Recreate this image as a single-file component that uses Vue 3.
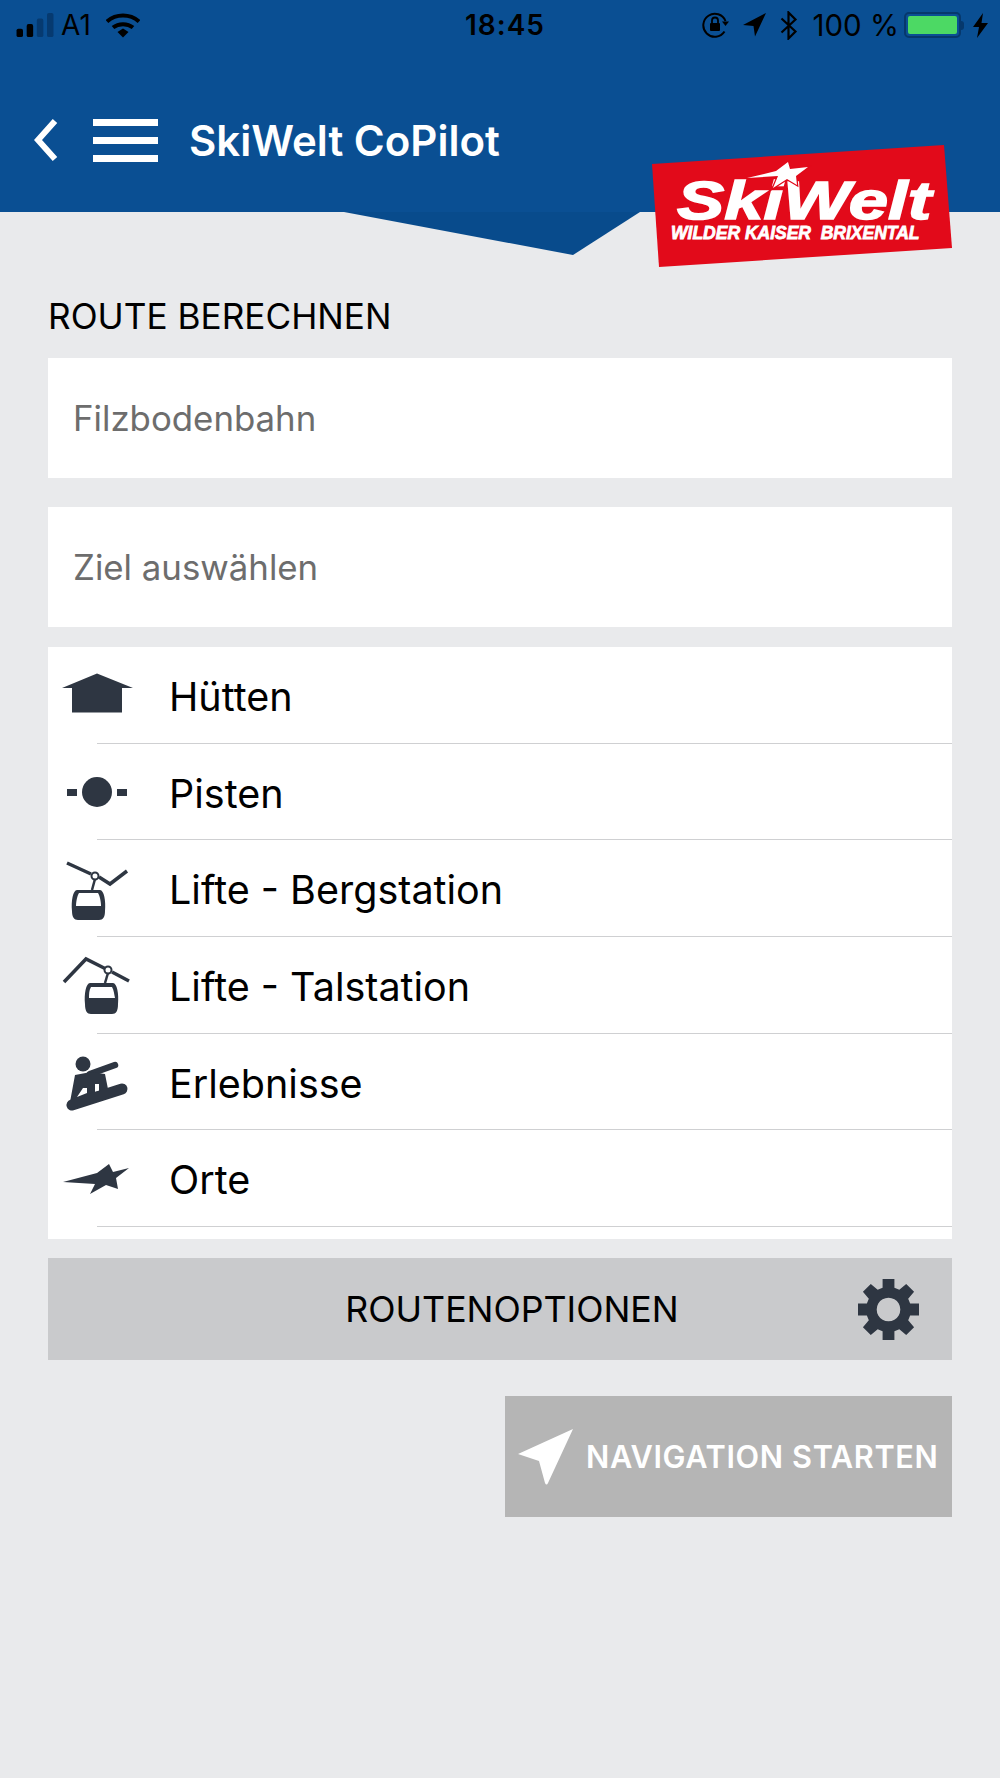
<script setup>
const rows = [
  { label: 'Hütten', icon: 'hut' },
  { label: 'Pisten', icon: 'piste' },
  { label: 'Lifte - Bergstation', icon: 'berg' },
  { label: 'Lifte - Talstation', icon: 'tal' },
  { label: 'Erlebnisse', icon: 'snow' },
  { label: 'Orte', icon: 'star' }
]
</script>

<template>
  <div class="page">
    <header class="head">
      <div class="status">
        <div class="status-left">
          <svg class="signal" width="40" height="24" viewBox="0 0 40 26">
            <rect x="0" y="17" width="7" height="9" rx="2" fill="#000" />
            <rect x="11" y="12" width="7" height="14" rx="2" fill="#000" />
            <rect x="22" y="6" width="7" height="20" rx="2" fill="#063a70" />
            <rect x="33" y="0" width="7" height="26" rx="2" fill="#063a70" />
          </svg>
          <span class="carrier">A1</span>
          <svg class="wifi" width="34" height="25" viewBox="0 0 34 25">
            <path d="M1 8.500C10 0.500 24 0.500 33 8.500" fill="none" stroke="#000" stroke-width="4" />
            <path d="M7 14.500C12.500 10 21.500 10 27 14.500" fill="none" stroke="#000" stroke-width="4" />
            <path d="M11.500 19L17 15.500L22.500 19L17 24.500Z" fill="#000" />
          </svg>
        </div>
        <span class="clock">18:45</span>
        <div class="status-right">
          <svg width="28" height="26" viewBox="0 0 28 26">
            <path d="M22.500 19.500A11.500 11.500 0 1 1 23.500 9" fill="none" stroke="#000" stroke-width="2" />
            <path d="M20 9.500H27L23.500 14Z" fill="#000" />
            <rect x="8" y="11" width="10" height="8" rx="1" fill="#000" />
            <path d="M10 11V8.500a3 3 0 0 1 6 0V11" fill="none" stroke="#000" stroke-width="1.800" />
          </svg>
          <svg class="gap-loc" width="24" height="24" viewBox="0 0 24 24">
            <path d="M23 0L12 23.500L10.500 13L0 12Z" fill="#000" />
          </svg>
          <svg class="gap-bt" width="18" height="29" viewBox="0 0 18 29">
            <path d="M1.500 7.500L15.500 20.500L8.500 27.500V1.500L15.500 8.500L1.500 21.500" fill="none" stroke="#000" stroke-width="2.200" />
          </svg>
          <span class="pct">100 %</span>
          <div class="battery"><div class="battery-fill"></div></div>
          <div class="battery-tip"></div>
          <svg class="bolt" width="15" height="25" viewBox="0 0 15 25">
            <path d="M10 0L0 14H6L4 25L15 10H8.500Z" fill="#000" />
          </svg>
        </div>
      </div>
      <nav class="bar">
        <svg class="back" width="24" height="44" viewBox="0 0 24 44">
          <path d="M21 3L4 22L21 41" fill="none" stroke="#fff" stroke-width="6" />
        </svg>
        <div class="burger"><i></i><i></i><i></i></div>
        <h1 class="title">SkiWelt CoPilot</h1>
      </nav>
    </header>

    <svg class="wedge" width="1000" height="44" viewBox="0 0 1000 44">
      <path d="M344 0L573 43L640 0Z" fill="#084b8c" />
    </svg>

    <div class="logo">
      <svg class="logo-star" width="68" height="33" viewBox="-3 -3 68 33">
        <path d="M0 17L29 10L41 1L43 8L61 6L49 15L50 24L40 18L26 27L31 15Z" fill="#fff" stroke="#e20a1a" stroke-width="2.500" paint-order="stroke" />
      </svg>
      <div class="logo-main"><span>SkiWelt</span></div>
      <div class="logo-sub">WILDER KAISER&nbsp; BRIXENTAL</div>
    </div>

    <main class="content">
      <h2 class="section">ROUTE BERECHNEN</h2>
      <div class="field">Filzbodenbahn</div>
      <div class="field second">Ziel auswählen</div>

      <ul class="list">
        <li v-for="row in rows" :key="row.label" class="row">
          <div class="row-icon">
            <svg width="80" height="64" viewBox="0 0 80 64" fill="#2e3642">
              <template v-if="row.icon === 'hut'">
                <path d="M4 25L39 10.500L75 25H64V49.500H14V25Z" />
              </template>
              <template v-else-if="row.icon === 'piste'">
                <rect x="9" y="29" width="10" height="7" />
                <circle cx="39" cy="32" r="15" />
                <rect x="59" y="29" width="10" height="7" />
              </template>
              <template v-else-if="row.icon === 'berg'">
                <path d="M9 6L33 17M41 20L52 27L69 14" fill="none" stroke="#2e3642" stroke-width="3.500" />
                <circle cx="37" cy="19" r="3.500" fill="none" stroke="#2e3642" stroke-width="2" />
                <path d="M37 22L34 33" stroke="#2e3642" stroke-width="2.500" />
                <path d="M19 33H42C46 33 48 44 47 54C47 60 45 63 41 63H20C16 63 14 60 14 54C13 44 15 33 19 33Z" />
                <path d="M21 36H40C42 39 43 45 43 49H18C18 45 19 39 21 36Z" fill="#fff" />
              </template>
              <template v-else-if="row.icon === 'tal'">
                <path d="M6 29L28 6L47 15.500M54 19L71 28" fill="none" stroke="#2e3642" stroke-width="3.500" />
                <circle cx="50" cy="17" r="3.500" fill="none" stroke="#2e3642" stroke-width="2" />
                <path d="M50 20L47 30" stroke="#2e3642" stroke-width="2.500" />
                <path d="M32 30H55C59 30 61 41 60 51C60 58 58 61 54 61H33C29 61 27 58 27 51C26 41 28 30 32 30Z" />
                <path d="M33 34H54C56 37 56 41 57 45H31C31 41 31 37 33 34Z" fill="#fff" />
              </template>
              <template v-else-if="row.icon === 'snow'">
                <circle cx="25" cy="14" r="7.500" />
                <path d="M32 24L57 15" fill="none" stroke="#2e3642" stroke-width="6.500" stroke-linecap="round" />
                <path fill-rule="evenodd" d="M17 25L33 22L47 24L50 39L12 52ZM25 38L19 47L29 43L29 38ZM37 34V42L41 41V34Z" />
                <path d="M14 55L64 39" fill="none" stroke="#2e3642" stroke-width="11" stroke-linecap="round" />
              </template>
              <template v-else>
                <path d="M5 35L39 26L51 17L55 25L71 21L58 31L60 42L48 38L32 47L37 37Z" />
              </template>
            </svg>
          </div>
          <span class="row-label">{{ row.label }}</span>
        </li>
        <li class="row-tail"></li>
      </ul>

      <button class="options">
        <span>ROUTENOPTIONEN</span>
        <svg class="gear" width="61" height="61" viewBox="0 0 62 62">
          <path fill="#2e3642" fill-rule="evenodd" d="M25 0H37V9L42 11L49 5L57 13L51 20L53 25H62V37H53L51 42L57 49L49 57L42 51L37 53V62H25V53L20 51L13 57L5 49L11 42L9 37H0V25H9L11 20L5 13L13 5L20 11L25 9ZM31 19A12 12 0 1 0 31.010 19Z" />
        </svg>
      </button>

      <div class="actions">
        <button class="start">
          <svg width="56" height="56" viewBox="0 0 56 56">
            <path d="M55 0L30 54C29 56 28 56 27 54L21 32L0 25Z" fill="#fff" />
          </svg>
          <span>NAVIGATION STARTEN</span>
        </button>
      </div>
    </main>
  </div>
</template>

<style>
html, body { margin: 0; background: #e9eaec; }
</style>

<style scoped>
.page {
  position: relative;
  width: 1000px;
  height: 1778px;
  overflow: hidden;
  background: #e9eaec;
  font-family: Inter, "Liberation Sans", sans-serif;
}
.head { height: 212px; background: #0a4f93; box-sizing: border-box; }
.status {
  height: 50px;
  display: grid;
  grid-template-columns: 1fr auto 1fr;
  align-items: center;
  color: #000;
}
.status-left { display: flex; align-items: center; padding-left: 15px; }
.carrier { margin-left: 6px; font-size: 28px; }
.wifi { margin-left: 15px; }
.clock { margin-left: 10px; font-size: 28px; font-weight: 600; letter-spacing: 1px; }
.status-right { display: flex; align-items: center; justify-content: flex-end; padding-right: 12px; }
.gap-loc { margin-left: 13px; }
.gap-bt { margin-left: 13px; }
.pct { margin-left: 15px; font-size: 29.500px; }
.battery {
  margin-left: 5px;
  width: 57px;
  height: 26px;
  box-sizing: border-box;
  border: 2px solid #06386c;
  border-radius: 5px;
  padding: 2px;
}
.battery-fill { height: 100%; background: #4cd964; border-radius: 2px; }
.battery-tip { width: 3px; height: 9px; background: #06386c; border-radius: 0 3px 3px 0; }
.bolt { margin-left: 9px; }
.bar { display: flex; align-items: center; height: 70px; margin-top: 55px; padding-left: 34px; }
.back { display: block; }
.burger { margin-left: 35px; width: 65px; display: flex; flex-direction: column; gap: 11px; }
.burger i { display: block; height: 7px; background: #fff; }
.title { margin: 0 0 0 31px; font-size: 42px; font-weight: 600; color: #fff; }
.wedge { position: absolute; left: 0; top: 212px; }
.logo {
  position: absolute;
  left: 652px;
  top: 145px;
  width: 300px;
  height: 122px;
  background: #e20a1a;
  clip-path: polygon(0 19px, 292px 0, 300px 103px, 7px 122px);
  color: #fff;
  font-family: "Liberation Sans", sans-serif;
  font-style: italic;
  font-weight: 700;
}
.logo-star { position: absolute; z-index: 1; left: 92px; top: 13px; }
.logo-main { padding: 35px 0 0 25px; height: 40px; font-size: 54px; line-height: 40px; }
.logo-main span {
  display: inline-block;
  transform: scaleX(1.310);
  transform-origin: left center;
  -webkit-text-stroke: 1.500px #fff;
}
.logo-sub { margin-top: 6px; padding-left: 19px; font-size: 17.500px; line-height: 14px; white-space: nowrap; -webkit-text-stroke: 0.800px #fff; }
.content { padding: 0 48px; position: relative; }
.section { margin: 0; padding-top: 85px; height: 61px; font-size: 35.200px; line-height: 38px; font-weight: 400; color: #000; }
.field {
  height: 120px;
  background: #fff;
  padding-left: 25px;
  display: flex;
  align-items: center;
  font-size: 34.800px;
  color: #6d6d6d;
}
.second { margin-top: 29px; }
.list { list-style: none; margin: 20px 0 0; padding: 0; height: 592px; background: #fff; }
.row { position: relative; height: 96.700px; display: flex; align-items: center; }
.row::after { content: ""; position: absolute; left: 49px; right: 0; bottom: 0; height: 1px; background: #cfd0d2; }
.row-icon { width: 122px; padding-left: 10px; box-sizing: border-box; flex: none; display: flex; }
.row-label { margin: 3px 0 0 -1px; font-size: 39.500px; color: #000; }
.options {
  margin-top: 19px;
  width: 100%;
  height: 102px;
  border: 0;
  background: #c9cacc;
  position: relative;
  font: inherit;
  font-size: 35.700px;
  color: #000;
  display: flex;
  align-items: center;
  justify-content: center;
  padding: 0 0 0 24px;
}
.gear { position: absolute; right: 33px; top: 21px; }
.actions { display: flex; justify-content: flex-end; margin-top: 36px; }
.start {
  width: 447px;
  height: 121px;
  border: 0;
  padding: 0 0 0 13px;
  background: #b5b5b5;
  color: #fff;
  font: inherit;
  font-size: 30.700px;
  font-weight: 600;
  letter-spacing: 0.620px;
  display: flex;
  align-items: center;
  gap: 12px;
}
</style>
